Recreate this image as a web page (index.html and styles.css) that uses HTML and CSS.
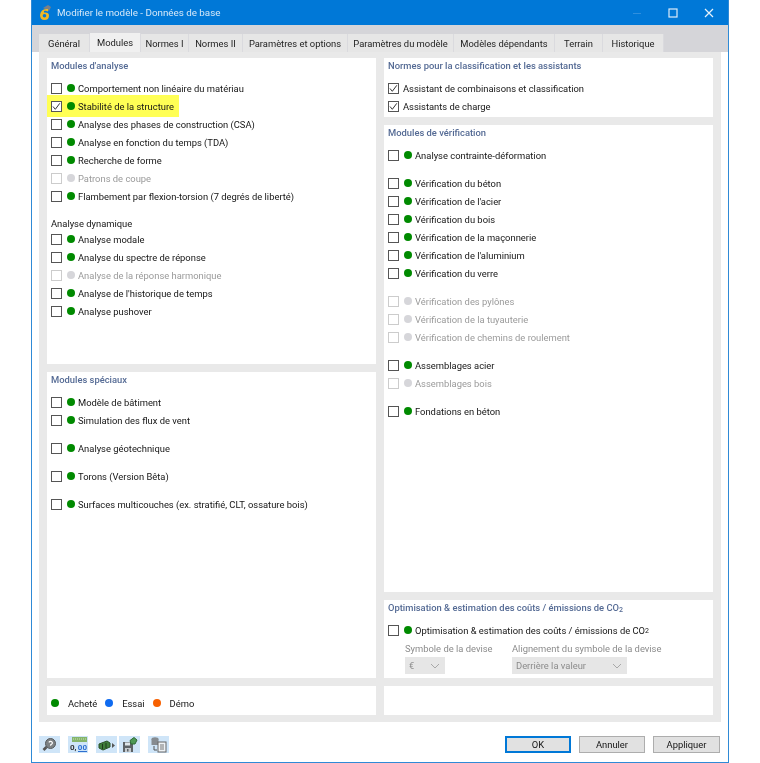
FILE: index.html
```html
<!DOCTYPE html>
<html lang="fr">
<head>
<meta charset="utf-8">
<title>Modifier le modèle</title>
<link rel="stylesheet" href="styles.css">
</head>
<body>
<div class="window">
  <header class="titlebar">
    <svg class="appicon" width="14" height="16" viewBox="0 0 14 16"><path d="M5 3 L10 0 L13 2 L11 6z" fill="#77808a"/><path d="M10 4 Q3 3 2 10 Q2 15 6.500 15 Q11 15 11 10.500 Q11 7 6 7.500 L6 6 Q8 5.500 10 6.500z" fill="#efb722"/><circle cx="6.500" cy="10.800" r="1.800" fill="#0078d7"/></svg>
    <span class="title">Modifier le modèle - Données de base</span>
    <span class="winbtns">
      <svg width="10" height="10" viewBox="0 0 10 10"><path d="M1 5.500h8" stroke="#2f8fde" stroke-width="1"/></svg>
      <svg width="10" height="10" viewBox="0 0 10 10"><rect x="1" y="1" width="8" height="8" fill="none" stroke="#dcecf9" stroke-width="1.200"/></svg>
      <svg width="10" height="10" viewBox="0 0 10 10"><path d="M1 1l8 8M9 1L1 9" stroke="#e6f2fb" stroke-width="1.200"/></svg>
    </span>
  </header>
  <div class="body">
    <nav class="tabs">
      <span class="tab t1">Général</span>
      <span class="tab t2 active">Modules</span>
      <span class="tab t3">Normes I</span>
      <span class="tab t4">Normes II</span>
      <span class="tab t5">Paramètres et options</span>
      <span class="tab t6">Paramètres du modèle</span>
      <span class="tab t7">Modèles dépendants</span>
      <span class="tab t8">Terrain</span>
      <span class="tab t9">Historique</span>
    </nav>
    <main class="sheet">
      <div class="col">
        <section class="panel p-analysis">
          <h2>Modules d'analyse</h2>
          <div class="list">
            <div class="row"><i class="cb"></i><i class="dot"></i>Comportement non linéaire du matériau</div>
            <div class="row"><span class="hl"><i class="cb on"><svg viewBox="0 0 9 9"><path d="M1 4.500l2.300 2.800 4.500-6" fill="none" stroke="#333" stroke-width="1"/></svg></i><i class="dot"></i>Stabilité de la structure</span></div>
            <div class="row"><i class="cb"></i><i class="dot"></i>Analyse des phases de construction (CSA)</div>
            <div class="row"><i class="cb"></i><i class="dot"></i>Analyse en fonction du temps (TDA)</div>
            <div class="row"><i class="cb"></i><i class="dot"></i>Recherche de forme</div>
            <div class="row off"><i class="cb"></i><i class="dot"></i>Patrons de coupe</div>
            <div class="row"><i class="cb"></i><i class="dot"></i>Flambement par flexion-torsion (7 degrés de liberté)</div>
          </div>
          <div class="sub">Analyse dynamique</div>
          <div class="list tight">
            <div class="row"><i class="cb"></i><i class="dot"></i>Analyse modale</div>
            <div class="row"><i class="cb"></i><i class="dot"></i>Analyse du spectre de réponse</div>
            <div class="row off"><i class="cb"></i><i class="dot"></i>Analyse de la réponse harmonique</div>
            <div class="row"><i class="cb"></i><i class="dot"></i>Analyse de l'historique de temps</div>
            <div class="row"><i class="cb"></i><i class="dot"></i>Analyse pushover</div>
          </div>
        </section>
        <section class="panel p-special">
          <h2>Modules spéciaux</h2>
          <div class="list">
            <div class="row"><i class="cb"></i><i class="dot"></i>Modèle de bâtiment</div>
            <div class="row gap10"><i class="cb"></i><i class="dot"></i>Simulation des flux de vent</div>
            <div class="row gap10"><i class="cb"></i><i class="dot"></i>Analyse géotechnique</div>
            <div class="row gap10"><i class="cb"></i><i class="dot"></i>Torons (Version Bêta)</div>
            <div class="row"><i class="cb"></i><i class="dot"></i>Surfaces multicouches (ex. stratifié, CLT, ossature bois)</div>
          </div>
        </section>
        <section class="panel p-legend">
          <span class="leg"><i class="dot"></i>Acheté</span>
          <span class="leg"><i class="dot blue"></i>Essai</span>
          <span class="leg"><i class="dot orange"></i>Démo</span>
        </section>
      </div>
      <div class="col">
        <section class="panel right p-norms">
          <h2>Normes pour la classification et les assistants</h2>
          <div class="list">
            <div class="row"><i class="cb on"><svg viewBox="0 0 9 9"><path d="M1 4.500l2.300 2.800 4.500-6" fill="none" stroke="#333" stroke-width="1"/></svg></i>Assistant de combinaisons et classification</div>
            <div class="row"><i class="cb on"><svg viewBox="0 0 9 9"><path d="M1 4.500l2.300 2.800 4.500-6" fill="none" stroke="#333" stroke-width="1"/></svg></i>Assistants de charge</div>
          </div>
        </section>
        <section class="panel right p-verif">
          <h2>Modules de vérification</h2>
          <div class="list">
            <div class="row"><i class="cb"></i><i class="dot"></i>Analyse contrainte-déformation</div>
          </div>
          <div class="list sp">
            <div class="row"><i class="cb"></i><i class="dot"></i>Vérification du béton</div>
            <div class="row"><i class="cb"></i><i class="dot"></i>Vérification de l'acier</div>
            <div class="row"><i class="cb"></i><i class="dot"></i>Vérification du bois</div>
            <div class="row"><i class="cb"></i><i class="dot"></i>Vérification de la maçonnerie</div>
            <div class="row"><i class="cb"></i><i class="dot"></i>Vérification de l'aluminium</div>
            <div class="row"><i class="cb"></i><i class="dot"></i>Vérification du verre</div>
          </div>
          <div class="list sp">
            <div class="row off"><i class="cb"></i><i class="dot"></i>Vérification des pylônes</div>
            <div class="row off"><i class="cb"></i><i class="dot"></i>Vérification de la tuyauterie</div>
            <div class="row off"><i class="cb"></i><i class="dot"></i>Vérification de chemins de roulement</div>
          </div>
          <div class="list sp">
            <div class="row"><i class="cb"></i><i class="dot"></i>Assemblages acier</div>
            <div class="row off"><i class="cb"></i><i class="dot"></i>Assemblages bois</div>
          </div>
          <div class="list sp">
            <div class="row"><i class="cb"></i><i class="dot"></i>Fondations en béton</div>
          </div>
        </section>
        <section class="panel right p-opt">
          <h2>Optimisation &amp; estimation des coûts / émissions de CO<sub>2</sub></h2>
          <div class="list near">
            <div class="row"><i class="cb"></i><i class="dot"></i>Optimisation &amp; estimation des coûts / émissions de CO<sub>2</sub></div>
          </div>
          <div class="fields">
            <div class="field f-sym"><label>Symbole de la devise</label><span class="select s-sym">€<svg width="10" height="6" viewBox="0 0 10 6"><path d="M1 1l4 4 4-4" fill="none" stroke="#a8a8a8"/></svg></span></div>
            <div class="field"><label>Alignement du symbole de la devise</label><span class="select s-al">Derrière la valeur<svg width="10" height="6" viewBox="0 0 10 6"><path d="M1 1l4 4 4-4" fill="none" stroke="#a8a8a8"/></svg></span></div>
          </div>
        </section>
        <section class="panel p-empty"></section>
      </div>
    </main>
    <footer class="foot">
      <div class="tools">
        <span class="tool"><svg viewBox="0 0 17 17"><path d="M5.500 11l-3 3" stroke="#555" stroke-width="2.600"/><circle cx="9.500" cy="7.500" r="5" fill="#7d8285" stroke="#55595c"/><path d="M7.800 6.300q1.700-1.800 3.300-.2 1 1.300-1.400 2.700v1" stroke="#fff" fill="none" stroke-width="1.200"/></svg></span>
        <span class="tool t-num"><svg viewBox="0 0 17 17"><rect x="2" y="1" width="15" height="5" fill="#86b56b"/><path d="M3 3h13" stroke="#c9e2b8" stroke-dasharray="1 1"/><rect x="8" y="15" width="9" height="1" fill="#2d6fd0"/></svg><b>0,</b><u>00</u></span>
        <span class="tool t-sm"><svg viewBox="0 0 17 17"><path d="M1 8l8-3 3 2v4l-7 3-4-2z" fill="#3f7d3a" stroke="#2d522a"/><path d="M4.500 8v5M8 7v5" stroke="#1f3a1c"/><path d="M14 7l3 2.500-3 2.500z" fill="#555"/></svg></span>
        <span class="tool"><svg viewBox="0 0 17 17"><path d="M2 6h10v10H2z" fill="#5d6266"/><rect x="4" y="6.500" width="5" height="3" fill="#dfe6ea"/><rect x="4" y="12" width="6" height="4" fill="#c5cace"/><rect x="6" y="13" width="1.500" height="2.500" fill="#5d6266"/><path d="M9 4.500l4-3 3 2.500-2 4-4 0z" fill="#4f9a55" stroke="#2e6a35"/></svg></span>
        <span class="tool t-last"><svg viewBox="0 0 17 17"><ellipse cx="5" cy="3" rx="3.500" ry="1.800" fill="#868b90"/><rect x="1.500" y="3" width="7" height="6" fill="#868b90"/><rect x="8" y="6" width="8" height="10" fill="#eef2f5" stroke="#666"/><path d="M10 9h4M10 11h4M10 13h4" stroke="#777"/><path d="M4 10v4h3" stroke="#555" fill="none"/></svg></span>
      </div>
      <div class="btns">
        <button class="btn def" type="button">OK</button>
        <button class="btn" type="button">Annuler</button>
        <button class="btn apply" type="button">Appliquer</button>
      </div>
    </footer>
  </div>
</div>
</body>
</html>
```

FILE: styles.css
```css
* { box-sizing: border-box; }
html, body { margin: 0; padding: 0; background: #fff; }
body { width: 760px; height: 763px; padding-left: 31px; font-family: Roboto, "Open Sans", sans-serif; font-size: 9.400px; color: #141414; overflow: hidden; }
.window { width: 698px; height: 763px; border: 1px solid #2f8ad6; border-top: 0; display: flex; flex-direction: column; background: #fff; filter: blur(.3px); }
.titlebar { height: 25px; flex: none; background: #0078d7; color: #d5e8f8; display: flex; align-items: center; padding-left: 6px; font-size: 9.800px; }
.appicon { margin-right: 5px; }
.title { flex: 1; }
.winbtns { display: flex; gap: 26px; padding-right: 14px; }
.winbtns svg { display: block; }
.body { flex: 1; display: flex; flex-direction: column; min-height: 0; }
.tabs { height: 27px; flex: none; background: #d5d5d9; display: flex; align-items: flex-end; padding: 0 0 0 7px; }
.tab { height: 18px; background: #e6e6e6; border-right: 1px solid #dadade; display: flex; align-items: center; justify-content: center; color: #222; }
.tab.active { height: 19px; background: #f0f0f0; }
.t1 { width: 51px; } .t2 { width: 51px; } .t3 { width: 48px; } .t4 { width: 54px; } .t5 { width: 105px; }
.t6 { width: 106px; } .t7 { width: 101px; } .t8 { width: 48px; } .t9 { width: 61px; }
.sheet { height: 670px; flex: none; margin: 0 7px 5px 7px; background: #e9e9e9; padding: 6px 8px 0 8px; display: grid; grid-template-columns: 329px 329px; column-gap: 8px; align-content: start; }
.col { display: flex; flex-direction: column; gap: 8px; }
.panel { background: #fff; padding: 0 4px; }
.p-analysis { height: 306px; }
.p-special { height: 306px; }
.p-legend { height: 29px; padding: 5px 4px 0; display: flex; align-items: center; gap: 8px; }
.p-norms { height: 59px; }
.p-verif { height: 467px; }
.p-opt { height: 78px; }
.p-empty { height: 29px; }
h2 { margin: 0; font-size: 9.400px; font-weight: 500; line-height: 15px; color: #546a94; }
.list { margin-top: 6px; }
.list.tight { margin-top: -1px; }
.list.near { margin-top: 4px; }
.row { height: 18px; display: flex; align-items: center; white-space: nowrap; }
.row.gap10 { margin-bottom: 10px; }
.list.sp { margin-top: 10px; }
.sub { margin-top: 11px; line-height: 15px; }
.hl { display: flex; align-items: center; background: #ffff55; height: 22px; margin-left: -4px; padding-left: 4px; padding-right: 5px; }
.cb { width: 11px; height: 11px; flex: none; border: 1px solid #555; background: #fff; margin-right: 4px; display: block; }
.cb svg { display: block; width: 9px; height: 9px; }
.dot { width: 8px; height: 8px; flex: none; border-radius: 50%; background: #008a00; margin-right: 3px; display: block; }
.cb + .dot { margin-left: 1px; }
.dot.blue { background: #0f6bf0; }
.dot.orange { background: #f76000; }
.off { color: #9a9a9a; }
.off .cb { border-color: #ccc; }
.off .dot { background: #d6d6da; }
.leg { display: flex; align-items: center; }
.leg .dot { margin-right: 9px; }
sub { font-size: 7px; vertical-align: baseline; position: relative; top: 1px; }
.fields { display: flex; gap: 20px; margin: 2px 0 0 17px; }
.field { display: flex; flex-direction: column; }
.f-sym { width: 87px; }
.field label { color: #8b8b8b; line-height: 15px; white-space: nowrap; }
.select { height: 17px; margin-top: 1px; background: #e6e6e6; color: #8b8b8b; display: flex; align-items: center; justify-content: space-between; padding: 0 5px 0 4px; }
.s-sym { width: 40px; }
.s-al { width: 115px; }
.foot { flex: 1; background: #fff; display: flex; justify-content: space-between; align-items: center; padding: 0 8px 0 7px; }
.tools { display: flex; gap: 8px; }
.tool { width: 21px; height: 17px; background: #cfe5f8; display: flex; align-items: center; justify-content: center; overflow: hidden; position: relative; }
.tool svg { width: 17px; height: 17px; }
.t-num { width: 20px; }
.t-sm { margin-right: -6px; }
.t-num b, .t-num u { position: absolute; font-size: 8px; bottom: 1px; line-height: 9px; font-weight: 700; }
.t-num b { left: 2px; color: #333; }
.t-num u { right: 1px; color: #2d6fd0; text-decoration: none; }
.btns { display: flex; gap: 8px; }
.btn { width: 66px; height: 17px; padding: 0; background: #e1e1e1; border: 1px solid #adadad; font: inherit; color: #141414; }
.btn.def { border: 2px solid #0078d7; }
.btn.apply { width: 67px; }
```
